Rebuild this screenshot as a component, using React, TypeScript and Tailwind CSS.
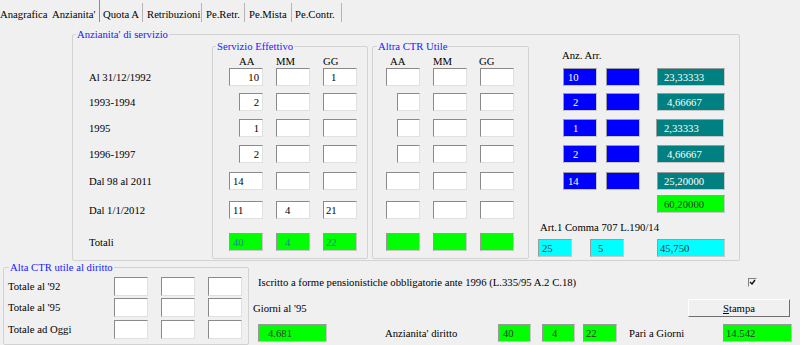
import React from "react";

const sunken =
  "border border-t-[#8a8a8a] border-l-[#8a8a8a] border-r-[#e0e0e0] border-b-[#e0e0e0]";
const colored =
  "border border-t-[#9a9a9a] border-l-[#9a9a9a] border-r-[#c8c8c8] border-b-[#c8c8c8]";

function Box({
  className = "",
  children,
}: {
  className?: string;
  children?: React.ReactNode;
}) {
  return (
    <div
      className={
        "h-[18px] flex items-center text-[10.7px] leading-[14px] shrink-0 whitespace-nowrap " +
        className
      }
    >
      {children}
    </div>
  );
}

function Group({
  title,
  className = "",
  titleClass = "left-[3px]",
  children,
}: {
  title: string;
  className?: string;
  titleClass?: string;
  children?: React.ReactNode;
}) {
  return (
    <div
      className={
        "relative border border-[#d2d2d2] rounded-[2px] shrink-0 " + className
      }
    >
      <span
        className={
          "absolute top-[-7px] px-[1px] bg-[#f0f0f0] text-[#1a1aff] leading-[13px] whitespace-nowrap " +
          titleClass
        }
      >
        {title}
      </span>
      {children}
    </div>
  );
}

const rowGap = ["", "mt-[7px]", "mt-[8px]", "mt-[8px]", "mt-[9px]", "mt-[11px]", "mt-[14px]"];

const labels = [
  "Al 31/12/1992",
  "1993-1994",
  "1995",
  "1996-1997",
  "Dal 98 al 2011",
  "Dal 1/1/2012",
  "Totali",
];

type Cell = { v?: string; cls?: string };

const seRows: Cell[][] = [
  [
    { v: "10", cls: `w-[34px] bg-white ${sunken} justify-end pr-[3px]` },
    { cls: `w-[34px] bg-white ${sunken}` },
    { v: "1", cls: `w-[34px] bg-white ${sunken} pl-[7px]` },
  ],
  [
    { v: "2", cls: `w-[24px] ml-[10px] bg-white ${sunken} justify-end pr-[3px]` },
    { cls: `w-[34px] bg-white ${sunken}` },
    { cls: `w-[34px] bg-white ${sunken}` },
  ],
  [
    { v: "1", cls: `w-[24px] ml-[10px] bg-white ${sunken} justify-end pr-[3px]` },
    { cls: `w-[34px] bg-white ${sunken}` },
    { cls: `w-[34px] bg-white ${sunken}` },
  ],
  [
    { v: "2", cls: `w-[24px] ml-[10px] bg-white ${sunken} justify-end pr-[3px]` },
    { cls: `w-[34px] bg-white ${sunken}` },
    { cls: `w-[34px] bg-white ${sunken}` },
  ],
  [
    { v: "14", cls: `w-[34px] bg-white ${sunken} pl-[3px]` },
    { cls: `w-[34px] bg-white ${sunken}` },
    { cls: `w-[34px] bg-white ${sunken}` },
  ],
  [
    { v: "11", cls: `w-[34px] bg-white ${sunken} pl-[3px]` },
    { v: "4", cls: `w-[34px] bg-white ${sunken} pl-[8px]` },
    { v: "21", cls: `w-[34px] bg-white ${sunken} pl-[2px]` },
  ],
  [
    { v: "40", cls: `w-[34px] bg-[#00ff00] ${colored} pl-[3px] text-[#1f7f99]` },
    { v: "4", cls: `w-[34px] bg-[#00ff00] ${colored} pl-[8px] text-[#1f7f99]` },
    { v: "22", cls: `w-[34px] bg-[#00ff00] ${colored} pl-[2px] text-[#1f7f99]` },
  ],
];

const altRows: Cell[][] = [
  [
    { cls: `w-[34px] bg-white ${sunken}` },
    { cls: `w-[34px] bg-white ${sunken}` },
    { cls: `w-[34px] bg-white ${sunken}` },
  ],
  [
    { cls: `w-[23px] ml-[11px] bg-white ${sunken}` },
    { cls: `w-[34px] bg-white ${sunken}` },
    { cls: `w-[34px] bg-white ${sunken}` },
  ],
  [
    { cls: `w-[23px] ml-[11px] bg-white ${sunken}` },
    { cls: `w-[34px] bg-white ${sunken}` },
    { cls: `w-[34px] bg-white ${sunken}` },
  ],
  [
    { cls: `w-[23px] ml-[11px] bg-white ${sunken}` },
    { cls: `w-[34px] bg-white ${sunken}` },
    { cls: `w-[34px] bg-white ${sunken}` },
  ],
  [
    { cls: `w-[34px] bg-white ${sunken}` },
    { cls: `w-[34px] bg-white ${sunken}` },
    { cls: `w-[34px] bg-white ${sunken}` },
  ],
  [
    { cls: `w-[34px] bg-white ${sunken}` },
    { cls: `w-[34px] bg-white ${sunken}` },
    { cls: `w-[34px] bg-white ${sunken}` },
  ],
  [
    { cls: `w-[34px] bg-[#00ff00] ${colored}` },
    { cls: `w-[34px] bg-[#00ff00] ${colored}` },
    { cls: `w-[34px] bg-[#00ff00] ${colored}` },
  ],
];

function Grid3({ rows, gap }: { rows: Cell[][]; gap: string }) {
  return (
    <div className="flex flex-col">
      {rows.map((r, i) => (
        <div key={i} className={"flex " + rowGap[i] + " " + gap}>
          {r.map((c, j) => (
            <div key={j} className="w-[34px] flex shrink-0">
              <Box className={c.cls}>{c.v}</Box>
            </div>
          ))}
        </div>
      ))}
    </div>
  );
}

const arr = [
  { a: "10", ap: "pl-[4px]", t: "23,33333", tp: "pl-[6px]", tm: "ml-[17px]" },
  { a: "2", ap: "pl-[9px]", t: "4,66667", tp: "pl-[9px]", tm: "ml-[17px]" },
  { a: "1", ap: "pl-[9px]", t: "2,33333", tp: "pl-[7px]", tm: "ml-[16px]" },
  { a: "2", ap: "pl-[9px]", t: "4,66667", tp: "pl-[9px]", tm: "ml-[17px]" },
  { a: "14", ap: "pl-[4px]", t: "25,20000", tp: "pl-[6px]", tm: "ml-[17px]" },
];

const tabs = [
  { t: "Quota A", c: "w-[43px] pl-[3px]" },
  { t: "Retribuzioni", c: "w-[59px] pl-[4px]" },
  { t: "Pe.Retr.", c: "w-[43px] pl-[4px]" },
  { t: "Pe.Mista", c: "w-[47px] pl-[4px]" },
  { t: "Pe.Contr.", c: "w-[50px] pl-[3px]" },
];

export default function App() {
  return (
    <div className="w-[800px] h-[345px] overflow-hidden bg-[#f0f0f0] text-[10.7px] leading-[13px] text-black flex flex-col font-['Liberation_Serif','Times_New_Roman',serif]">
      {/* Tab bar */}
      <div className="h-[22px] flex items-stretch shrink-0">
        <div className="w-[52px] flex items-center pt-[6px]">
          <span className="whitespace-nowrap">Anagrafica</span>
        </div>
        <div className="w-[48px] flex items-center pt-[6px] border-r border-r-[#8c8c8c]">
          Anzianita'
        </div>
        {tabs.map((t) => (
          <div
            key={t.t}
            className={
              "flex items-center pt-[6px] mt-[3px] border-r border-r-[#b4b4b4] whitespace-nowrap " +
              t.c
            }
          >
            <span className="-mt-[3px]">{t.t}</span>
          </div>
        ))}
      </div>

      {/* Main group */}
      <Group
        title="Anzianita' di servizio"
        className="ml-[72px] mt-[12px] w-[668px] h-[227px]"
      >
        <div className="flex items-start">
          {/* labels */}
          <div className="w-[139px] pl-[16px] pt-[33px] flex flex-col shrink-0">
            {labels.map((l, i) => (
              <div key={l} className={"h-[18px] flex items-center " + rowGap[i]}>
                {l}
              </div>
            ))}
          </div>

          {/* Servizio Effettivo */}
          <Group title="Servizio Effettivo" className="mt-[11px] w-[156px] h-[213px]">
            <div className="pl-[16px] flex flex-col">
              <div className="mt-[8px] h-[13px] flex">
                <span className="w-[47px] pl-[10px]">AA</span>
                <span className="w-[47px]">MM</span>
                <span>GG</span>
              </div>
              <Grid3 rows={seRows} gap="gap-[13px]" />
            </div>
          </Group>

          {/* Altra CTR Utile */}
          <Group
            title="Altra CTR Utile"
            titleClass="left-[4px]"
            className="mt-[11px] ml-[4px] w-[157px] h-[213px]"
          >
            <div className="pl-[13px] flex flex-col">
              <div className="mt-[8px] h-[13px] flex">
                <span className="w-[47px] pl-[4px]">AA</span>
                <span className="w-[46px]">MM</span>
                <span>GG</span>
              </div>
              <Grid3 rows={altRows} gap="gap-[13px]" />
            </div>
          </Group>

          {/* Right column */}
          <div className="ml-[9px] flex flex-col">
            <div className="mt-[14px] h-[13px] pl-[24px]">Anz. Arr.</div>
            <div className="mt-[6px] flex flex-col">
              {arr.map((r, i) => (
                <div key={i} className={"flex pl-[25px] " + rowGap[i]}>
                  <Box className={`w-[34px] bg-[#0000ff] ${colored} text-white ${r.ap}`}>
                    {r.a}
                  </Box>
                  <Box className={`w-[34px] ml-[9px] bg-[#0000ff] ${colored}`} />
                  <Box
                    className={`w-[68px] bg-[#008080] ${colored} text-white ${r.tp} ${r.tm}`}
                  >
                    {r.t}
                  </Box>
                </div>
              ))}
            </div>
            <div className="mt-[5px] flex">
              <Box className={`w-[68px] ml-[119px] bg-[#00ff00] ${colored} pl-[6px] text-[#333]`}>
                60,20000
              </Box>
            </div>
            <div className="mt-[8px] h-[13px] pl-[2px] whitespace-nowrap">
              Art.1 Comma 707 L.190/14
            </div>
            <div className="mt-[5px] flex">
              <Box className={`w-[34px] bg-[#00ffff] ${colored} pl-[3px] text-[#333]`}>25</Box>
              <Box className={`w-[34px] ml-[18px] bg-[#00ffff] ${colored} pl-[7px] text-[#333]`}>
                5
              </Box>
              <Box className={`w-[68px] ml-[33px] bg-[#00ffff] ${colored} pl-[2px] text-[#333]`}>
                45,750
              </Box>
            </div>
          </div>
        </div>
      </Group>

      {/* Bottom section */}
      <div className="flex items-start">
        <Group
          title="Alta CTR utile al diritto"
          titleClass="left-[5px]"
          className="ml-[3px] mt-[6px] w-[246px] h-[78px]"
        >
          <div className="flex flex-col pt-[9px]">
            {[
              { l: "Totale al '92", m: "" },
              { l: "Totale al '95", m: "mt-[2px]" },
              { l: "Totale ad Oggi", m: "mt-[3px]" },
            ].map((r) => (
              <div key={r.l} className={"flex items-center h-[19px] " + r.m}>
                <span className="w-[110px] pl-[4px]">{r.l}</span>
                <div className={`w-[34px] h-[19px] bg-white ${sunken}`} />
                <div className={`w-[34px] h-[19px] ml-[13px] bg-white ${sunken}`} />
                <div className={`w-[34px] h-[19px] ml-[13px] bg-white ${sunken}`} />
              </div>
            ))}
          </div>
        </Group>

        <div className="flex-1 flex flex-col">
          <div className="mt-[15px] h-[13px] flex items-center pl-[9px] pr-[43px]">
            <span className="whitespace-nowrap">
              Iscritto a forme pensionistiche obbligatorie ante 1996 (L.335/95 A.2 C.18)
            </span>
            <span className="ml-auto w-[9px] h-[9px] border-t border-l border-t-[#808080] border-l-[#808080] border-r border-b border-r-[#f8f8f8] border-b-[#f8f8f8] bg-[#f0f0f0] flex items-center justify-center">
              <svg width="7" height="7" viewBox="0 0 7 7">
                <path d="M1 3 L3 5 L6 1" stroke="#111" strokeWidth="1.4" fill="none" />
              </svg>
            </span>
          </div>
          <div className="mt-[10px] h-[18px] flex items-center pl-[4px] pr-[10px]">
            <span>Giorni al '95</span>
            <button className="ml-auto w-[102px] h-[18px] bg-[#f0f0f0] border border-t-[#fdfdfd] border-l-[#fdfdfd] border-r-[#6e6e6e] border-b-[#6e6e6e] text-[10.7px] leading-[13px] flex items-center justify-center">
              <span>
                <span className="underline">S</span>tampa
              </span>
            </button>
          </div>
          <div className="mt-[7px] h-[18px] flex items-center pl-[9px]">
            <Box className={`w-[69px] bg-[#00ff00] ${colored} pl-[9px] text-[#333]`}>4.681</Box>
            <span className="ml-[58px] w-[113px] whitespace-nowrap">Anzianita' diritto</span>
            <Box className={`w-[33px] bg-[#00ff00] ${colored} pl-[4px] text-[#333]`}>40</Box>
            <Box className={`w-[33px] ml-[11px] bg-[#00ff00] ${colored} pl-[9px] text-[#333]`}>4</Box>
            <Box className={`w-[34px] ml-[8px] bg-[#00ff00] ${colored} pl-[2px] text-[#333]`}>22</Box>
            <span className="ml-[12px] w-[94px] whitespace-nowrap">Pari a Giorni</span>
            <Box className={`w-[69px] bg-[#00ff00] ${colored} pl-[2px] text-[#333]`}>14.542</Box>
          </div>
        </div>
      </div>
    </div>
  );
}
